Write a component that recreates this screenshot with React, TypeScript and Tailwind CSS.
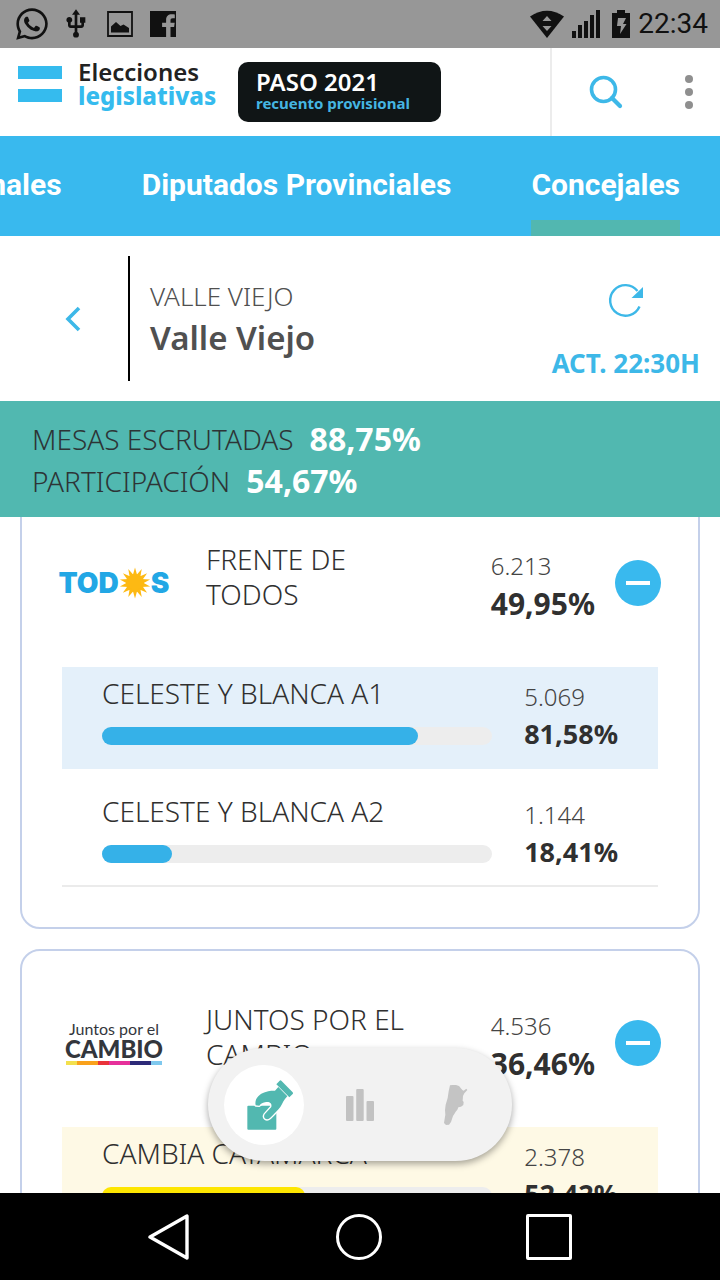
import React, { useState } from "react";
import { FaWhatsapp } from "react-icons/fa";
import { MdUsb } from "react-icons/md";

type ListResult = {
  name: string;
  votes: string;
  percent: string;
  value: number;
  highlighted?: boolean;
};

type Party = {
  id: string;
  name: string;
  votes: string;
  percent: string;
  logo: React.ReactNode;
  barClass: string;
  rowClass: string;
  lists: ListResult[];
};

const SunIcon = () => (
  <svg viewBox="-16 -16 32 32" className="h-8 w-8" aria-hidden="true">
    <g fill="#fdb913">
      <circle r="9" />
      {Array.from({ length: 14 }, (_, i) => (
        <path key={i} d="M-2.4 -7 L0 -15.5 L2.4 -7 Z" transform={`rotate(${(i * 360) / 14})`} />
      ))}
    </g>
  </svg>
);

const TodosLogo = () => (
  <div className="flex items-center justify-center font-[Inter] text-[28px] leading-8 font-black text-[#22a7e5]">
    <span>TOD</span>
    <SunIcon />
    <span>S</span>
  </div>
);

const JuntosLogo = () => (
  <div className="flex w-24 flex-col items-center font-[Lato] text-[#33363c]">
    <span className="text-base leading-4">Juntos por el</span>
    <span className="text-2xl leading-6 font-black">CAMBIO</span>
    <div className="flex h-1 w-full">
      <span className="flex-1 bg-[#f3e04d]" />
      <span className="flex-[2] bg-[#f9a11b]" />
      <span className="flex-1 bg-[#e9333a]" />
      <span className="flex-[2] bg-[#e6309a]" />
      <span className="flex-[2] bg-[#2d2a78]" />
      <span className="flex-1 bg-[#7ec8ee]" />
    </div>
  </div>
);

const parties: Party[] = [
  {
    id: "todos",
    name: "FRENTE DE TODOS",
    votes: "6.213",
    percent: "49,95%",
    logo: <TodosLogo />,
    barClass: "bg-[#35b1e8]",
    rowClass: "bg-[#e4f0fa]",
    lists: [
      { name: "CELESTE Y BLANCA A1", votes: "5.069", percent: "81,58%", value: 81, highlighted: true },
      { name: "CELESTE Y BLANCA A2", votes: "1.144", percent: "18,41%", value: 18 },
    ],
  },
  {
    id: "juntos",
    name: "JUNTOS POR EL CAMBIO",
    votes: "4.536",
    percent: "36,46%",
    logo: <JuntosLogo />,
    barClass: "bg-[#fee600]",
    rowClass: "bg-[#fef9e5]",
    lists: [
      { name: "CAMBIA CATAMARCA", votes: "2.378", percent: "52,42%", value: 52, highlighted: true },
    ],
  },
];

const StatusBar = () => (
  <div className="flex h-12 shrink-0 items-center justify-between bg-[#979797] px-3 text-[#111]">
    <div className="flex items-center">
      <FaWhatsapp className="ml-1 h-9 w-8" />
      <MdUsb className="ml-3 h-8 w-8" />
      <svg viewBox="0 0 26 26" className="ml-[15px] h-[26px] w-[26px]" aria-hidden="true">
        <path d="M1 1h24v24H1z" fill="none" stroke="currentColor" strokeWidth="1.8" />
        <path d="M4 21.500v-6l5-4.500 4.500 4 3-1.500 5.500 3.500v4.500z" fill="currentColor" />
      </svg>
      <svg viewBox="0 0 28 28" className="ml-4 h-7 w-7" aria-hidden="true">
        <path
          d="M1 1h26v26h-5.500V17h3.600l.6-4.300h-4.200v-2.300c0-1.400.5-2.200 2.300-2.200h2V4.500c-.6-.1-1.700-.2-2.900-.2-3.700 0-5.800 2-5.800 5.500v2.900h-4V17h4v10H1z"
          fill="currentColor"
        />
      </svg>
    </div>
    <div className="flex items-center">
      <svg viewBox="0 0 34 28" className="h-7 w-[34px]" aria-hidden="true">
        <path d="M0 6.500Q17-5 34 6.500L17 28z" fill="currentColor" />
        <path d="M17 6l4.500 5h-9zM12.500 16h9L17 21z" fill="#979797" />
      </svg>
      <svg viewBox="0 0 28 28" className="ml-2 h-7 w-7" fill="currentColor" aria-hidden="true">
        <path d="M0 21h4v7H0zM6 15h4v13H6zM12 11h4v17h-4zM18 5h4v23h-4zM24 0h4v28h-4z" />
      </svg>
      <svg viewBox="0 0 18 28" className="ml-3 h-7 w-[18px]" aria-hidden="true">
        <path d="M0 3h5V0h8v3h5v25H0z" fill="currentColor" />
        <path d="M6 8h8l-3 6h3.500L8 24l1-8H5z" fill="#979797" />
      </svg>
      <span className="ml-2 font-[Roboto] text-[28px] leading-9">22:34</span>
    </div>
  </div>
);

const AppHeader = () => (
  <header className="flex h-22 shrink-0 items-stretch bg-white">
    <div className="flex flex-1 items-start pt-3 pl-[18px]">
      <div className="mt-[6px] flex w-11 flex-col gap-[10px]">
        <span className="h-[13px] bg-[#35bbee]" />
        <span className="h-[13px] bg-[#35bbee]" />
      </div>
      <div className="ml-4 w-[160px] text-[24px] leading-6 font-semibold whitespace-nowrap text-[#222]">
        <div>Elecciones</div>
        <div className="font-extrabold text-[#35bbee]">legislativas</div>
      </div>
      <div className="mt-[2px] flex h-[60px] w-[203px] flex-col justify-center rounded-[10px] bg-[#101516] pb-[2px] pl-[18px] whitespace-nowrap">
        <span className="text-[24px] leading-6 font-semibold text-white">PASO 2021</span>
        <span className="text-[15px] leading-[18px] font-bold text-[#45b5e2]">recuento provisional</span>
      </div>
    </div>
    <button aria-label="Buscar" className="flex w-[110px] items-center justify-center border-l-2 border-[#ececec]">
      <svg viewBox="0 0 34 34" className="h-[34px] w-[34px]" fill="none" stroke="#3db8e8" aria-hidden="true">
        <circle cx="14.500" cy="14.500" r="12" strokeWidth="3.600" />
        <path d="M23 23l8 8" strokeWidth="4.200" strokeLinecap="round" />
      </svg>
    </button>
    <button aria-label="Más opciones" className="flex w-[60px] flex-col items-center justify-center gap-[5px] pr-[2px]">
      <span className="h-2 w-2 rounded-full bg-[#8f8f8f]" />
      <span className="h-2 w-2 rounded-full bg-[#8f8f8f]" />
      <span className="h-2 w-2 rounded-full bg-[#8f8f8f]" />
    </button>
  </header>
);

const tabs = ["Diputados Nacionales", "Diputados Provinciales", "Concejales"];

const Tabs = () => {
  const [active, setActive] = useState("Concejales");
  return (
    <nav className="flex h-[100px] shrink-0 justify-end gap-20 overflow-hidden bg-[#39b9ee] pr-10 font-[Roboto] text-[30px] font-bold text-white">
      {tabs.map((tab) => (
        <button
          key={tab}
          onClick={() => setActive(tab)}
          className={`shrink-0 border-b-16 pt-3 whitespace-nowrap ${
            active === tab ? "border-[#52b7b0]" : "border-transparent"
          }`}
        >
          {tab}
        </button>
      ))}
    </nav>
  );
};

const PlaceHeader = () => (
  <section className="flex h-[165px] shrink-0 items-center bg-white pr-5">
    <button aria-label="Volver" className="flex w-32 justify-center pl-[18px] text-[#3db8e8]">
      <svg viewBox="0 0 16 26" className="h-[26px] w-4" fill="none" stroke="currentColor" strokeWidth="3.600" aria-hidden="true">
        <path d="M14 2L3 13l11 11" />
      </svg>
    </button>
    <div className="flex h-[125px] flex-1 flex-col justify-center border-l-2 border-black pb-[2px] pl-5 text-[#505050]">
      <div className="text-[26px] leading-10 font-light">VALLE VIEJO</div>
      <h1 className="text-[33px] leading-11 font-semibold">Valle Viejo</h1>
    </div>
    <div className="flex flex-col items-center gap-6 pt-7">
      <button aria-label="Actualizar">
        <svg viewBox="0 0 36 36" className="h-9 w-9" aria-hidden="true">
          <path d="M31.500 23.500A15.300 15.300 0 1 1 29.500 8" fill="none" stroke="#3db8e8" strokeWidth="2.400" />
          <path d="M35 4v11H23.500z" fill="#3db8e8" />
        </svg>
      </button>
      <span className="text-[26px] leading-10 font-bold text-[#3db8e8]">ACT. 22:30H</span>
    </div>
  </section>
);

const Stats = () => (
  <section className="flex shrink-0 flex-col bg-[#51b8b0] px-8 pt-[17px] pb-[15px] leading-[42px] text-[#2d3436]">
    <div className="flex items-center gap-4">
      <span className="text-[28px] font-[350]">MESAS ESCRUTADAS</span>
      <strong className="text-[32px] font-bold text-white">88,75%</strong>
    </div>
    <div className="flex items-center gap-4">
      <span className="text-[28px] font-[350]">PARTICIPACIÓN</span>
      <strong className="text-[32px] font-bold text-white">54,67%</strong>
    </div>
  </section>
);

const PartyCard: React.FC<{ party: Party }> = ({ party }) => {
  const [open, setOpen] = useState(true);
  return (
    <article className="rounded-[20px] border-2 border-[#c4d0ea] px-10 pb-10">
      <div className="flex h-44 items-center pt-2">
        <div className="flex w-[104px] justify-center">{party.logo}</div>
        <h2 className="ml-10 w-[230px] pb-3 text-[28px] leading-[35px] font-[350] text-[#303030]">
          {party.name}
        </h2>
        <div className="ml-auto pt-1 leading-[38px]">
          <div className="text-[24px] font-light text-[#444]">{party.votes}</div>
          <div className="text-[30px] font-bold text-[#303030]">{party.percent}</div>
        </div>
        <button
          aria-label={open ? "Contraer" : "Expandir"}
          onClick={() => setOpen(!open)}
          className="mr-[-3px] ml-5 flex h-[46px] w-[46px] shrink-0 items-center justify-center rounded-full bg-[#39b9ee]"
        >
          <span className="h-1 w-6 bg-white" />
        </button>
      </div>
      {open && (
        <ul className="flex flex-col gap-4">
          {party.lists.map((list) => (
            <li
              key={list.name}
              className={`flex h-[102px] gap-8 border-b-2 px-10 ${
                list.highlighted ? `border-transparent ${party.rowClass}` : "border-[#ebebeb]"
              }`}
            >
              <div className="flex-1 pt-2">
                <div className="text-[28px] leading-9 font-[350] text-[#303030]">{list.name}</div>
                <div className="mt-4 h-[18px] rounded-[9px] bg-[#ededed]">
                  <div className={`h-full rounded-[9px] ${party.barClass}`} style={{ width: `${list.value}%` }} />
                </div>
              </div>
              <div className="shrink-0 pt-[11px] leading-[37px]">
                <div className="text-[24px] font-light text-[#444]">{list.votes}</div>
                <div className="text-[27px] font-bold text-[#303030]">{list.percent}</div>
              </div>
            </li>
          ))}
        </ul>
      )}
    </article>
  );
};

const BallotIcon = () => (
  <svg viewBox="24 22 138 150" className="ml-3 h-[50px] w-[46px]" fill="#52b8b0" aria-hidden="true">
    <rect x="25" y="99" width="87" height="72" rx="3" />
    <path
      d="M50 98C46 80 58 67 72 61C88 54 98 54 108 54L118 43L145 71C135 80 131 92 124 103C117 113 104 125 93 136C82 145 71 136 77 125L97 103C100 91 90 86 78 89C70 91 64 94 61 99Z"
      stroke="white"
      strokeWidth="8"
      strokeLinejoin="round"
      style={{ paintOrder: "stroke" }}
    />
    <path d="M112 35L122 24Q124 22 127 24L161 59Q163 62 161 64L151 74Z" />
  </svg>
);

const FloatingMenu = () => (
  <div className="absolute bottom-8 left-1/2 flex h-[113px] w-[304px] -translate-x-1/2 items-center rounded-full bg-[#f2f2f2] px-4 shadow-[0_3px_7px_rgba(0,0,0,0.35)]">
    <button aria-label="Resultados" className="flex h-20 w-20 items-center justify-center rounded-full bg-white">
      <BallotIcon />
    </button>
    <button aria-label="Gráficos" className="flex h-20 flex-1 items-center justify-center">
      <svg viewBox="0 0 28 32" className="h-8 w-7" fill="#c2c2c2" aria-hidden="true">
        <rect y="7" width="7.500" height="25" rx="1" />
        <rect x="10.200" width="7.500" height="32" rx="1" />
        <rect x="20.500" y="12" width="7.500" height="20" rx="1" />
      </svg>
    </button>
    <button aria-label="Mapa" className="flex h-20 w-20 items-center justify-center">
      <svg viewBox="29 27 72 120" className="h-10 w-6" fill="#c4c4c4" aria-hidden="true">
        <path d="M47 28L62 26L74 30L84 42L88 44L96 38L99 42L90 52L86 60L85 74L88 78L87 87L80 92L72 94L69 101L64 107L60 114L56 120L53 129L50 138L44 146L35 147L29 141L31 128L33 116L32 102L34 86L40 66L43 46Z" />
      </svg>
    </button>
  </div>
);

const AndroidNav = () => (
  <div className="flex h-[87px] shrink-0 items-center justify-center gap-36 bg-black pr-[2px]">
    <button aria-label="Atrás">
      <svg viewBox="0 0 46 46" className="h-[46px] w-[46px]" fill="none" stroke="white" strokeWidth="3.400" strokeLinejoin="round" aria-hidden="true">
        <path d="M41 2v42L4 23z" />
      </svg>
    </button>
    <button aria-label="Inicio" className="h-[46px] w-[46px] rounded-full border-3 border-white" />
    <button aria-label="Recientes" className="h-[46px] w-[46px] rounded-xs border-3 border-white" />
  </div>
);

export default function App() {
  return (
    <div className="flex h-screen flex-col overflow-hidden bg-white font-['Noto_Sans',sans-serif]">
      <StatusBar />
      <AppHeader />
      <Tabs />
      <PlaceHeader />
      <Stats />
      <main className="relative min-h-0 flex-1">
        <div className="h-full overflow-hidden px-5">
          <div className="-mt-7 flex flex-col gap-5">
            {parties.map((party) => (
              <PartyCard key={party.id} party={party} />
            ))}
          </div>
        </div>
        <FloatingMenu />
      </main>
      <AndroidNav />
    </div>
  );
}
